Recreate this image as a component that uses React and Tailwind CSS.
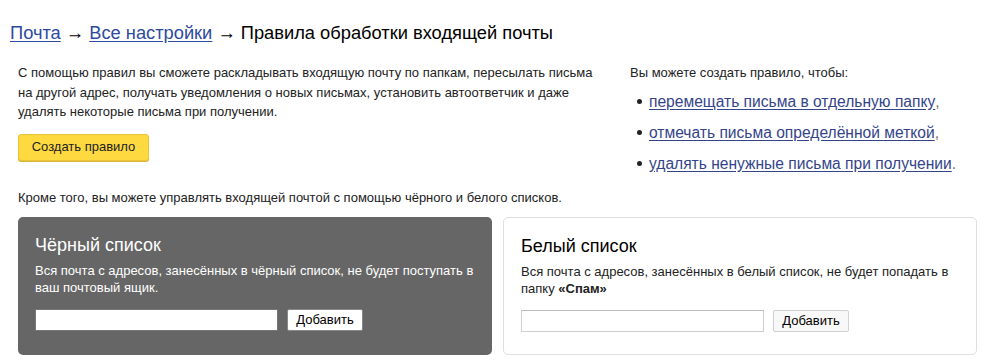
import React from 'react';

const font = { fontFamily: '"Liberation Sans", Arial, sans-serif' };

const ListCard = ({ dark, title, children }) => (
  <div
    className={`w-[474px] h-[138px] rounded-[5px] pl-[17px] pt-[17px] ${
      dark ? 'bg-[#666666] text-white' : 'bg-white border border-[#dedede] text-black'
    }`}
  >
    <h3 className="text-[18px] leading-[22px]">{title}</h3>
    <div className={`mt-[6px] text-[13px] leading-[17px] w-[440px] ${dark ? 'text-white' : 'text-[#222]'}`}>
      {children}
    </div>
    <div className="mt-[13px] flex items-center gap-[9px]">
      <input
        type="text"
        className={`w-[243px] h-[22px] bg-white outline-none ${
          dark ? 'border border-[#777]' : 'border border-[#cfcfcf] border-t-[#bcbcbc]'
        }`}
      />
      <button
        className={`w-[76px] h-[22px] text-[13px] text-black rounded-[2px] border ${
          dark ? 'bg-white border-[#888]' : 'bg-[#f8f8f8] border-[#d0d0d0]'
        }`}
      >
        Добавить
      </button>
    </div>
  </div>
);

export default function App() {
  const rules = [
    { text: 'перемещать письма в отдельную папку', end: ',' },
    { text: 'отмечать письма определённой меткой', end: ',' },
    { text: 'удалять ненужные письма при получении', end: '.' },
  ];

  return (
    <div className="w-[1006px] h-[362px] bg-white pl-[10px] pt-[22px] text-black overflow-hidden" style={font}>
      <h1 className="text-[18.3px] leading-[22px]">
        <a href="#" className="text-[#2d4a9f] underline underline-offset-2">Почта</a>
        <span> → </span>
        <a href="#" className="text-[#2d4a9f] underline underline-offset-2">Все настройки</a>
        <span> → Правила обработки входящей почты</span>
      </h1>

      <div className="flex pl-[8px] mt-[19px]">
        <div className="w-[604px]">
          <p className="text-[13px] leading-[19.5px] text-[#222] w-[590px]">
            С помощью правил вы сможете раскладывать входящую почту по папкам, пересылать письма
            на другой адрес, получать уведомления о новых письмах, установить автоответчик и даже
            удалять некоторые письма при получении.
          </p>
          <button className="mt-[12px] w-[131px] h-[27px] rounded-[3px] bg-[#ffd940] border border-[#e8c33a] shadow-[0_1px_0_#d9b73a] text-[13px] text-[#222]">
            Создать правило
          </button>
          <p className="mt-[27px] text-[13px] leading-[19.5px] text-[#222]">
            Кроме того, вы можете управлять входящей почтой с помощью чёрного и белого списков.
          </p>
        </div>

        <div className="ml-[8px]">
          <p className="text-[13px] leading-[19.5px] text-[#222]">Вы можете создать правило, чтобы:</p>
          <ul className="mt-[9px] pl-[7px]">
            {rules.map((r) => (
              <li key={r.text} className="flex items-center text-[15.6px] leading-[20px] mb-[11px]">
                <span className="w-[5px] h-[5px] rounded-full bg-[#222] mr-[7px]" />
                <a href="#" className="text-[#34448a] underline underline-offset-2">{r.text}</a>
                <span className="text-[#777]">{r.end}</span>
              </li>
            ))}
          </ul>
        </div>
      </div>

      <div className="flex gap-[11px] pl-[8px] mt-[10px]">
        <ListCard dark title="Чёрный список">
          <p>Вся почта с адресов, занесённых в чёрный список, не будет поступать в ваш почтовый ящик.</p>
        </ListCard>
        <ListCard title="Белый список">
          <p>Вся почта с адресов, занесённых в белый список, не будет попадать в</p>
          <p>папку <b className="font-bold">«Спам»</b></p>
        </ListCard>
      </div>
    </div>
  );
}
